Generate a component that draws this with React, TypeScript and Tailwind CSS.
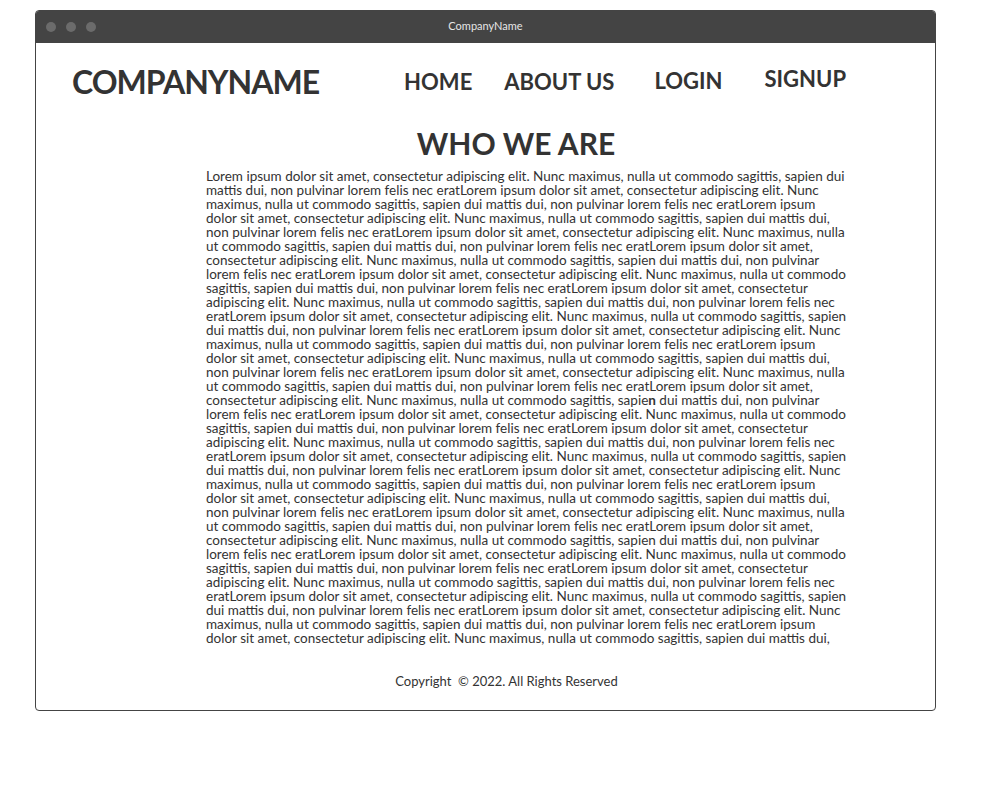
const lines: React.ReactNode[] = [
  "Lorem ipsum dolor sit amet, consectetur adipiscing elit. Nunc maximus, nulla ut commodo sagittis, sapien dui",
  "mattis dui, non pulvinar lorem felis nec eratLorem ipsum dolor sit amet, consectetur adipiscing elit. Nunc",
  "maximus, nulla ut commodo sagittis, sapien dui mattis dui, non pulvinar lorem felis nec eratLorem ipsum",
  "dolor sit amet, consectetur adipiscing elit. Nunc maximus, nulla ut commodo sagittis, sapien dui mattis dui,",
  "non pulvinar lorem felis nec eratLorem ipsum dolor sit amet, consectetur adipiscing elit. Nunc maximus, nulla",
  "ut commodo sagittis, sapien dui mattis dui, non pulvinar lorem felis nec eratLorem ipsum dolor sit amet,",
  "consectetur adipiscing elit. Nunc maximus, nulla ut commodo sagittis, sapien dui mattis dui, non pulvinar",
  "lorem felis nec eratLorem ipsum dolor sit amet, consectetur adipiscing elit. Nunc maximus, nulla ut commodo",
  "sagittis, sapien dui mattis dui, non pulvinar lorem felis nec eratLorem ipsum dolor sit amet, consectetur",
  "adipiscing elit. Nunc maximus, nulla ut commodo sagittis, sapien dui mattis dui, non pulvinar lorem felis nec",
  "eratLorem ipsum dolor sit amet, consectetur adipiscing elit. Nunc maximus, nulla ut commodo sagittis, sapien",
  "dui mattis dui, non pulvinar lorem felis nec eratLorem ipsum dolor sit amet, consectetur adipiscing elit. Nunc",
  "maximus, nulla ut commodo sagittis, sapien dui mattis dui, non pulvinar lorem felis nec eratLorem ipsum",
  "dolor sit amet, consectetur adipiscing elit. Nunc maximus, nulla ut commodo sagittis, sapien dui mattis dui,",
  "non pulvinar lorem felis nec eratLorem ipsum dolor sit amet, consectetur adipiscing elit. Nunc maximus, nulla",
  "ut commodo sagittis, sapien dui mattis dui, non pulvinar lorem felis nec eratLorem ipsum dolor sit amet,",
  <>
    consectetur adipiscing elit. Nunc maximus, nulla ut commodo sagittis, sapie<b>n</b> dui mattis dui, non pulvinar
  </>,
  "lorem felis nec eratLorem ipsum dolor sit amet, consectetur adipiscing elit. Nunc maximus, nulla ut commodo",
  "sagittis, sapien dui mattis dui, non pulvinar lorem felis nec eratLorem ipsum dolor sit amet, consectetur",
  "adipiscing elit. Nunc maximus, nulla ut commodo sagittis, sapien dui mattis dui, non pulvinar lorem felis nec",
  "eratLorem ipsum dolor sit amet, consectetur adipiscing elit. Nunc maximus, nulla ut commodo sagittis, sapien",
  "dui mattis dui, non pulvinar lorem felis nec eratLorem ipsum dolor sit amet, consectetur adipiscing elit. Nunc",
  "maximus, nulla ut commodo sagittis, sapien dui mattis dui, non pulvinar lorem felis nec eratLorem ipsum",
  "dolor sit amet, consectetur adipiscing elit. Nunc maximus, nulla ut commodo sagittis, sapien dui mattis dui,",
  "non pulvinar lorem felis nec eratLorem ipsum dolor sit amet, consectetur adipiscing elit. Nunc maximus, nulla",
  "ut commodo sagittis, sapien dui mattis dui, non pulvinar lorem felis nec eratLorem ipsum dolor sit amet,",
  "consectetur adipiscing elit. Nunc maximus, nulla ut commodo sagittis, sapien dui mattis dui, non pulvinar",
  "lorem felis nec eratLorem ipsum dolor sit amet, consectetur adipiscing elit. Nunc maximus, nulla ut commodo",
  "sagittis, sapien dui mattis dui, non pulvinar lorem felis nec eratLorem ipsum dolor sit amet, consectetur",
  "adipiscing elit. Nunc maximus, nulla ut commodo sagittis, sapien dui mattis dui, non pulvinar lorem felis nec",
  "eratLorem ipsum dolor sit amet, consectetur adipiscing elit. Nunc maximus, nulla ut commodo sagittis, sapien",
  "dui mattis dui, non pulvinar lorem felis nec eratLorem ipsum dolor sit amet, consectetur adipiscing elit. Nunc",
  "maximus, nulla ut commodo sagittis, sapien dui mattis dui, non pulvinar lorem felis nec eratLorem ipsum",
  "dolor sit amet, consectetur adipiscing elit. Nunc maximus, nulla ut commodo sagittis, sapien dui mattis dui,",
];

export default function App() {
  return (
    <div className="w-[1000px] h-[810px] bg-white pt-[10px] pl-[35px] font-['Lato',sans-serif] text-[#333]">
      <div className="w-[901px] h-[701px] border border-[#444] rounded-[4px] overflow-hidden flex flex-col">
        {/* window chrome */}
        <div className="h-[32px] bg-[#444] relative flex items-center pl-[10px] gap-[10px] shrink-0">
          <span className="w-[10px] h-[10px] rounded-full bg-[#6b6b6b]" />
          <span className="w-[10px] h-[10px] rounded-full bg-[#6b6b6b]" />
          <span className="w-[10px] h-[10px] rounded-full bg-[#6b6b6b]" />
          <span className="absolute left-0 right-0 top-0 h-full flex items-center justify-center text-[11px] text-[#e6e6e6] pb-[1px]">
            CompanyName
          </span>
        </div>

        {/* header */}
        <div className="flex items-start h-[80px] pl-[36px] pt-[19px]">
          <div className="text-[32px] font-bold leading-[40px] tracking-[-1px]">COMPANYNAME</div>
          <nav className="flex text-[22px] font-bold leading-[26px]">
            <a className="ml-[85px] mt-[7px]">HOME</a>
            <a className="ml-[32px] mt-[7px]">ABOUT US</a>
            <a className="ml-[40px] mt-[6px]">LOGIN</a>
            <a className="ml-[42px] mt-[4px]">SIGNUP</a>
          </nav>
        </div>

        {/* content */}
        <div className="ml-[170px] w-[680px]">
          <h1 className="w-[640px] pr-[20px] text-center text-[30px] font-bold leading-[40px]">WHO WE ARE</h1>
          <div className="text-[13.5px] leading-[14px] mt-[6px]">
            {lines.map((l, i) => (
              <div key={i} className="whitespace-nowrap">
                {l}
              </div>
            ))}
          </div>
        </div>

        <footer className="mt-[28px] text-[13px] leading-[16px] text-center pl-[42px]">
          Copyright &nbsp;© 2022. All Rights Reserved
        </footer>
      </div>
    </div>
  );
}
